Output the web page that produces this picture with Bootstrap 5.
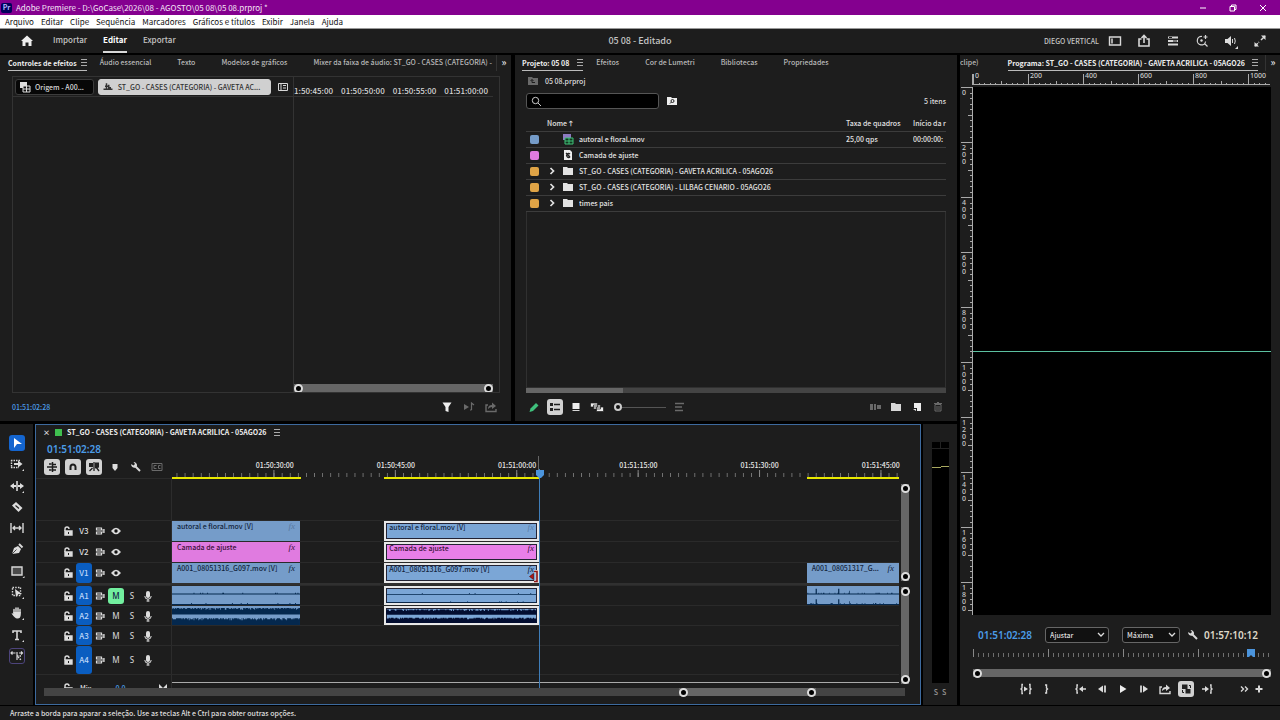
<!DOCTYPE html>
<html lang="pt-BR">
<head>
<meta charset="utf-8">
<meta name="viewport" content="width=device-width, initial-scale=1">
<title>Adobe Premiere</title>
<link href="https://cdn.jsdelivr.net/npm/bootstrap@5.3.0/dist/css/bootstrap.min.css" rel="stylesheet">
<style>
:root{--panel:#1d1d1d;--line:#333;--blue:#4b9ce8;--clip:#759cc9;--pink:#e07be0;--txt:#dcdcdc}
body{background:#000;color:var(--txt);font:500 7px/12px "Noto Sans CJK JP","Noto Sans",sans-serif;min-height:100vh}
svg{display:block;flex:none}
button,select,input{font:inherit;color:inherit}
a{color:inherit;text-decoration:none}
.ic{width:16px;height:16px;fill:none;stroke:currentColor;stroke-width:1.4}
.ib{width:16px;height:16px;padding:0;border:0;background:none;color:#d8d8d8;border-radius:3px;flex:none;display:block}
.ib.on{background:#d2d2d2;color:#1d1d1d}
.dim{color:#6a6a6a}

/* Window frame */
.titlebar{background:#84008f;height:15px;color:#f3e3f5;font-size:8px;font-weight:400;padding:0 2px 0 1px}
.titlebar .logo{width:11px;height:10px;border-radius:2px;background:#00005b;color:#b7b6ff;font-size:7px;line-height:9px;text-align:center;font-weight:700}
.wbtn{width:30px;height:15px;border:0;background:none;padding:0;color:#fff}
.menubar{background:#fff;color:#111;height:14px;padding:0 5px;gap:7px;font-size:8px;font-weight:400;line-height:14px;border-bottom:1px solid #999}
.topbar{background:var(--panel);height:24px;font-size:8px;padding:0 12px;color:#c4c4c4}
.topbar .side{flex:1 1 0}
.topbar .home{margin:0 2px 0 7px}
.topbar .mode{line-height:22px;border-bottom:2px solid transparent}
.topbar .mode.active{color:#fff;border-color:#d8d8d8;font-weight:700}
.topbar .docname{font-size:9px}
.topbar .user{font-size:7px}
.topicons{gap:13px}
.status{height:14px;background:var(--panel);padding-left:10px;line-height:14px;margin-top:1px;color:#ddd}

/* Panels */
.workspace{display:grid;grid-template-columns:minmax(0,957fr) minmax(0,320fr);gap:3px;padding-top:2px}
.upper{display:grid;grid-template-columns:minmax(0,511fr) minmax(0,442fr);gap:4px}
.panel{background:var(--panel)}
.tabs{height:16px;line-height:14px;white-space:nowrap;overflow:hidden;color:#b8b8b8}
.tabs .tab{flex:none}
.tabs .tab.active{color:#eee;font-weight:700;border-bottom:1px solid #bbb;height:16px}
.burger{width:6px;height:7px;border-top:1px solid #aaa;border-bottom:1px solid #aaa;background:linear-gradient(#aaa,#aaa) 0 2px/6px 1px no-repeat}
.more{font-size:10px;line-height:14px;width:15px;flex:none;border-left:1px solid #333;text-align:center;color:#eee}
.knob{width:9px;height:9px;border:2px solid #ddd;border-radius:50%;background:#000;flex:none}
.bar{background:#666;height:8px;display:flex;justify-content:space-between;align-items:center}
.foot{height:28px}
.tc{color:var(--blue)}
.tc.big,.dur{font-size:10px;font-weight:600;font-family:"Noto Sans",sans-serif}
.dur{color:#ddd8c8}

/* Effect controls */
.fxt{gap:26px}
.fxt .tab:nth-child(2){margin-left:-13px}
.fxbox{margin:5px 11px 0 12px;border:1px solid var(--line);min-height:0}
.fxleft{width:281px;border-right:1px solid var(--line)}
.fxhead{height:20px;border-bottom:1px solid var(--line);padding:0 2px}
.chip{height:16px;border:1px solid #3c3c3c;border-radius:3px;background:#070707;color:#d8d8d8;padding:0 3px;gap:4px;line-height:14px;white-space:nowrap}
.chip.lit{background:#d0d0d0;color:#333;border-color:#d0d0d0}
.chip .ic{width:12px}
.srcchip{width:79px}
.seqchip{width:174px}
.fxruler{height:20px;border-bottom:1px solid var(--line);white-space:nowrap;overflow:hidden;color:#d4d4d4;padding-top:8px;margin-right:6px;font-size:8px;gap:8px}
.fxph{width:3px;height:6px;background:var(--blue);align-self:end;margin-left:auto}
.fxbar{margin-right:6px}
.fxfoot{padding:0 12px;gap:6px}

/* Project bin */
.prt{padding-left:7px;gap:26px}
.prt .tab:nth-child(2){margin-left:-13px}
.prpath{height:20px;padding-left:10px;gap:4px}
.prsearch{height:20px;padding:0 11px;gap:5px}
.search{width:133px;height:16px;border:1px solid #555;border-radius:3px;background:#000;gap:4px;padding:0 4px}
.search input{border:0;background:none;width:100px;height:12px;padding:0;outline:0}
.bin{table-layout:fixed;width:100%;border-collapse:collapse;white-space:nowrap;color:#e2e2e2}
.bin th{font-weight:500;height:16px;padding:0}
.bin td{height:16px;padding:0;border-top:1px solid #3c3c3c;border-bottom:1px solid #3c3c3c;overflow:hidden}
.bin td .ic{margin:-1px 0}
.bin td .chv{margin-left:-3px}
.binwrap{margin:4px 11px 0}
.binbox{border:1px solid #303030;border-top:0}
.sw{width:9px;height:9px;border-radius:2px;display:block;margin-left:4px}
.hscroll{height:5px;background:#444}
.hscroll div{height:5px;width:23%;background:#666}
.prfoot{padding:0 11px;gap:5px}
.zoomr{width:52px;height:9px;margin-left:4px;appearance:none;background:linear-gradient(#555,#555) 0 4px/100% 1px no-repeat}
.zoomr::-webkit-slider-thumb{appearance:none;width:8px;height:8px;border:2px solid #ccc;border-radius:50%;background:#111}

/* Tools and timeline */
.lower{display:flex;gap:2px;padding-top:3px}
.tools{width:33px;padding-top:11px}
.toolcol{height:229px}
.tool.sel{background:#1465cf;color:#fff}
.timeline{border:1px solid #3d6a9e;min-width:0;padding-bottom:8px;overflow:hidden}
.tltab{height:14px;line-height:14px;padding-left:7px;color:#eee}
.tlsq{width:7px;height:7px;background:#3fbf4f;margin:0 1px}
.thead{width:136px;flex:none;border-right:1px solid #2c2c2c}
.tlane{flex:1 1 0;min-width:0}
.vcol{width:21px;flex:none;padding-left:2px}
.tlrule{height:40px}
.tlrule .thead{padding-left:8px;border-right:0;border-bottom:1px solid #2a2a2a}
.tlrule .tc{margin:4px 0 4px 3px}
.tlbtns{gap:5px}
.rulelane{justify-content:flex-end}
.tllabels{padding-left:5.8%;height:9px;line-height:9px;white-space:nowrap;color:#e8e8e8}
.lab{flex:none;width:17.7%;text-align:center}
.gaprow{height:41px}
.trk{height:21px;border-top:1px solid #2a2a2a}
.trk .thead{padding-left:24px;align-items:center}
.trk .tlane{display:flex}
.trk.aud{height:20px}
.trk.tall{height:29px}
.trk.mix{height:14px;overflow:hidden;align-items:flex-start}
.trk.mix .tlane{border-top:1px solid #aaa;margin-top:7px}
.trk.mix .thead{padding-top:5px}
.mixv{margin-left:24px}
.tname{width:16px;border:0;padding:0;background:none;color:#ddd;font-size:8px;border-radius:3px}
.tname.tgt{background:#0a5dc0;color:#bcd6f8;align-self:stretch}
.ms{width:16px;height:16px;border:0;padding:0;background:none;color:#ccc;border-radius:3px;font-size:8px;font-family:"Noto Sans",sans-serif;line-height:16px}
.ms.mute{background:#72ef9f;color:#124}
.cl{height:100%;background:var(--clip);color:#12243c;padding:0 5px;line-height:11px;white-space:nowrap;overflow:hidden;flex:none;display:flex;justify-content:space-between}
.cl.pk{background:var(--pink);color:#3a103a}
.cl.sel{border:2px solid #e8e8e8;box-shadow:inset 0 0 0 1px #223;padding:0 3px;line-height:8px;background:#7ba6d6}
.cl.sel.pk{background:#e87fe8}
.cl.au{padding:0;position:relative}
.cl svg{width:100%;height:100%}
.fade{position:absolute;top:0;left:3px;width:7px;height:6px;background:#ddd;border:1px solid #555}
.fade.out{left:auto;right:3px}
.fx{font-style:italic;font-family:"Liberation Serif",serif;font-size:9px}
.fx.off{opacity:.3}
.split{height:2px;background:#303030}
.yel{height:2px;background:#e8e800;flex:none}
.vbar{width:8px;background:#666;display:flex;flex-direction:column;justify-content:space-between;align-items:center}
.v1{height:97px;margin-top:5px}
.v2{margin-top:6px;margin-bottom:4px}
.phlayer{left:136px;right:21px;top:17px;bottom:0;pointer-events:none}
.ph{left:50.5%;top:13px;bottom:0;width:1px;background:#3f7db8}
.phthin{left:50.3%;top:0;height:14px;width:1px;background:#666}
.phead{left:50.5%;top:14px;margin-left:-3px}
.trim{left:49.1%;top:114px}
.hbar{background:#444;height:8px;margin:0 15px 0 8px}
.hthumb{width:137px;margin-left:635px}
.meters{width:34px;padding-top:18px}
.meter{width:17px;height:241px;background:#000}
.mss{margin-top:3px;color:#999}

/* Program monitor */
.pgt{margin-left:29px;width:250px}
.hruler{height:16px;margin:0 10px 0 12px;position:relative}
.hlab{overflow:hidden}
.hlab span{width:55px;flex:none;padding-left:3px}
.vruler{width:13px;contain:size;overflow:hidden;position:relative}
.rl{font:500 7px/9px "Noto Sans",sans-serif;color:#ccc}
.vruler span{display:block;height:55px;width:5px;word-break:break-all;line-height:7px;padding-top:2px;margin-left:2px}
.video{background:#000;margin-right:9px}
.guide{height:1px;background:#5cc0a0}
.pgctl{height:34px;padding:5px 22px 0 18px}
.pick{height:16px;border:1px solid #666;border-radius:3px;background:#111;color:#ddd;padding:0 4px;appearance:none;line-height:14px;width:100%;display:block}
.pickw{position:relative}
.pickw svg{position:absolute;right:4px;top:5px;pointer-events:none}
.p1{width:64px;margin-left:13px}
.p2{width:58px;margin:0 5px 0 13px}
.pgr{margin:0 9px 0 13px}
.pgph{left:92%;top:0}
.pgbar{margin:12px 9px 4px 13px}
.transport{padding:0 13px 8px 58px;gap:5px}
.g1{margin-left:13px}
</style>
</head>
<body class="d-flex flex-column">
<svg width="0" height="0" class="position-absolute" aria-hidden="true">
<defs>
<symbol id="lock" viewBox="0 0 16 16"><path d="M5 8V6a2 2 0 0 1 4 0" fill="none"/><path d="M5 8h7v4H5z" fill="#ddd"/><path d="M8.500 9v2" stroke="#1d1d1d" stroke-width="1"/></symbol>
<symbol id="sync" viewBox="0 0 16 16"><path d="M4.500 5h5v2h-5zM4.500 9h5v2h-5zM9 7h3v2H9M12 6v4" fill="none" stroke-width="1.200"/></symbol>
<symbol id="eye" viewBox="0 0 16 16"><path d="M4 8q4-5 8 0q-4 5-8 0z" fill="#ddd"/><circle cx="8" cy="8" r="1.700" fill="#111" stroke="none"/></symbol>
<symbol id="mic" viewBox="0 0 16 16"><rect x="6" y="3" width="4" height="7" rx="2" fill="#ddd" stroke="none"/><path d="M4.800 8q0 3.200 3.200 3.200T11.200 8M8 11v2.500M6.500 13h3" stroke-width="1"/></symbol>
<symbol id="folder" viewBox="0 0 16 16"><path d="M3 4h4l1 1h5v7H3z" fill="currentColor" stroke="none"/></symbol>
<symbol id="chev" viewBox="0 0 16 16"><path d="M6.500 5l3 3-3 3" stroke-width="1.700"/></symbol>
<symbol id="wrench" viewBox="0 0 16 16"><path d="M7 7l5 5" stroke-width="2"/><path d="M3.200 5a3.200 3.200 0 0 0 4.300 3.500L9 7a3.400 3.400 0 0 0-3.500-4L7 5 5.500 6.500z" fill="currentColor" stroke="none"/></symbol>
<symbol id="seq" viewBox="0 0 16 16"><path d="M6 3v3M4 7h5M2 11h12M9 5v5M6 8v4M11 8v3" stroke-width="2"/></symbol>
<symbol id="export" viewBox="0 0 16 16"><path d="M5 6H3v6.500h10V10"/><path d="M5 10q0-4 4-4V3.500L13 7 9 10V8Q7 8 5 10z" fill="currentColor" stroke="none"/></symbol>
</defs>
</svg>

<header>
  <div class="titlebar d-flex align-items-center">
    <span class="logo me-1">Pr</span><span>Adobe Premiere - D:\GoCase\2026\08 - AGOSTO\05 08\05 08.prproj *</span>
    <div class="ms-auto d-flex">
      <button class="wbtn" aria-label="Minimizar"><svg class="ic mx-auto" viewBox="0 0 16 16"><path d="M5 8h6" stroke-width="1"/></svg></button>
      <button class="wbtn" aria-label="Restaurar"><svg class="ic mx-auto" viewBox="0 0 16 16"><path d="M5 6.500h4.500V11H5zM6.500 6.500V5H11v4.500H9.500" stroke-width="1"/></svg></button>
      <button class="wbtn" aria-label="Fechar"><svg class="ic mx-auto" viewBox="0 0 16 16"><path d="M5 5l6 6M11 5l-6 6" stroke-width="1"/></svg></button>
    </div>
  </div>
  <nav class="menubar d-flex">
    <a href="#">Arquivo</a><a href="#">Editar</a><a href="#">Clipe</a><a href="#">Sequência</a><a href="#">Marcadores</a><a href="#">Gráficos e títulos</a><a href="#">Exibir</a><a href="#">Janela</a><a href="#">Ajuda</a>
  </nav>
  <div class="topbar d-flex align-items-center">
    <div class="side d-flex align-items-center gap-3">
      <button class="ib home" aria-label="Início"><svg class="ic" viewBox="0 0 16 16"><path d="M8 2.500L2 8h1.500v5H6.500V9.500h3V13h3V8H14z" fill="#eee" stroke="none"/></svg></button>
      <a class="mode" href="#">Importar</a><a class="mode active" href="#">Editar</a><a class="mode" href="#">Exportar</a>
    </div>
    <div class="docname">05 08 - Editado</div>
    <div class="side d-flex align-items-center justify-content-end">
      <span class="user me-2">DIEGO VERTICAL</span>
      <div class="d-flex topicons">
      <button class="ib" aria-label="Espaços de trabalho"><svg class="ic" viewBox="0 0 16 16"><path d="M2.500 4h11v8h-11z"/><path d="M5 5.500v5" stroke-width="1.500"/></svg></button>
      <button class="ib" aria-label="Exportação rápida"><svg class="ic" viewBox="0 0 16 16"><path d="M5.500 6H3v7h10V6h-2.500M8 10V3M5.500 5L8 2.500 10.500 5" stroke-width="1.600"/></svg></button>
      <button class="ib" aria-label="Progresso"><svg class="ic" viewBox="0 0 16 16"><path d="M3 4.500h10M3 8h10M3 11.500h10" stroke-width="2.200"/><path d="M8 8h4M4 4.500h3" stroke="#1d1d1d" stroke-width="1"/></svg></button>
      <button class="ib" aria-label="Pesquisar"><svg class="ic" viewBox="0 0 16 16"><path d="M8 3.500a4.200 4.200 0 1 0 3.600 5M10.500 10.500l3 3M11.500 2v4M9.500 4h4" stroke-width="1.200"/><circle cx="7.500" cy="7.500" r="1.200" fill="#ddd" stroke="none"/></svg></button>
      <button class="ib" aria-label="Áudio"><svg class="ic" viewBox="0 0 16 16"><path d="M2 6h2.500L8 3v10L4.500 10H2z" fill="#ddd" stroke="none"/><path d="M9.500 6v4M11.500 5q1.500 3 0 6" stroke-width="1"/><path d="M15 13v3h-3z" fill="#ddd" stroke="none"/></svg></button>
      <button class="ib" aria-label="Tela cheia"><svg class="ic" viewBox="0 0 16 16"><path d="M9 7l4-4M3 13l4-4" stroke-width="1.500" stroke-dasharray="4 1"/><path d="M9 2.500h4.500V7zM2.500 9v4.500H7z" fill="#ddd" stroke="none"/></svg></button>
      </div>
    </div>
  </div>
</header>

<main class="workspace flex-fill">
 <div class="d-flex flex-column">
  <div class="upper flex-fill">
    <section class="panel d-flex flex-column">
      <div class="tabs d-flex">
        <div class="d-flex flex-fill fxt overflow-hidden"><div class="tab active d-flex align-items-center ms-2">Controles de efeitos<i class="burger ms-1"></i></div><a class="tab" href="#">Áudio essencial</a><a class="tab" href="#">Texto</a><a class="tab" href="#">Modelos de gráficos</a><a class="tab" href="#">Mixer da faixa de áudio: ST_GO - CASES (CATEGORIA) -</a></div>
        <a class="more" href="#">»</a>
      </div>
      <div class="fxbox d-flex flex-fill">
        <div class="fxleft">
          <div class="fxhead d-flex align-items-center gap-1">
            <button class="chip d-flex align-items-center srcchip"><svg width="12" height="12" viewBox="0 0 12 12"><path d="M1 1h7v6H1z" fill="#ddd"/><path d="M4 5h7v6H4z" fill="#111" stroke="#ddd"/><path d="M4 8h7M7.500 5v6" stroke="#ddd"/></svg>Origem - A00...</button>
            <button class="chip lit d-flex align-items-center seqchip"><svg class="ic"><use href="#seq"/></svg>ST_GO - CASES (CATEGORIA) - GAVETA AC...</button>
            <button class="ib" aria-label="Mostrar linha do tempo"><svg class="ic" viewBox="0 0 16 16"><path d="M3.500 4.500h9v7h-9zM6 4.500v7M8 6.500h3M8 9h3" stroke-width="1"/></svg></button>
          </div>
        </div>
        <div class="flex-fill d-flex flex-column overflow-hidden">
          <div class="fxruler d-flex"><span>1:50:45:00</span><span>01:50:50:00</span><span>01:50:55:00</span><span>01:51:00:00</span><i class="fxph"></i></div>
          <div class="bar mt-auto fxbar"><i class="knob"></i><i class="knob"></i></div>
        </div>
      </div>
      <div class="foot d-flex align-items-center fxfoot">
        <span class="tc me-auto">01:51:02:28</span>
        <button class="ib" aria-label="Filtro"><svg class="ic" viewBox="0 0 16 16"><path d="M3.500 3.500h9L9.500 8v5l-3-1V8z" fill="#eee" stroke="none"/></svg></button>
        <button class="ib dim" aria-label="Reproduzir áudio"><svg class="ic" viewBox="0 0 16 16"><path d="M3 5l5 3-5 3z" fill="currentColor" stroke="none"/><path d="M10.500 11V4l2.500 2M9 11h1.500" stroke-width="1.200"/></svg></button>
        <button class="ib dim" aria-label="Exportar efeito"><svg class="ic"><use href="#export"/></svg></button>
      </div>
    </section>

    <section class="panel d-flex flex-column">
      <div class="tabs d-flex prt"><div class="tab active d-flex align-items-center">Projeto: 05 08<i class="burger ms-2"></i></div><a class="tab" href="#">Efeitos</a><a class="tab" href="#">Cor de Lumetri</a><a class="tab" href="#">Bibliotecas</a><a class="tab" href="#">Propriedades</a></div>
      <div class="d-flex align-items-center prpath"><svg class="ic dim" viewBox="0 0 16 16"><path d="M3 4h4l1 1h5v7H3z" fill="currentColor" stroke="none"/><path d="M7 6.500v3h3M5.500 8L7 6.500 8.500 8" stroke="#1d1d1d" stroke-width="1"/></svg>05 08.prproj</div>
      <div class="d-flex align-items-center prsearch">
        <label class="search d-flex align-items-center"><svg width="11" height="11" viewBox="0 0 11 11" fill="none" stroke="#ccc"><circle cx="4.500" cy="4.500" r="3.200"/><path d="M7 7l3 3"/></svg><input type="search" aria-label="Pesquisar no projeto"></label>
        <button class="ib" aria-label="Compartimento de pesquisa"><svg class="ic" viewBox="0 0 16 16"><path d="M3 4h4l1 1h5v7H3z" fill="#eee" stroke="none"/><circle cx="8.500" cy="8" r="1.500" stroke="#222" stroke-width="1"/><path d="M7.500 9L6 10.500" stroke="#222" stroke-width="1"/></svg></button>
        <span class="ms-auto">5 itens</span>
      </div>
      <div class="binwrap flex-fill d-flex flex-column">
        <table class="bin">
          <colgroup><col style="width:21px"><col style="width:13px"><col style="width:19px"><col><col style="width:67px"><col style="width:33px"></colgroup>
          <thead><tr><th></th><th colspan="3">Nome <b>🡑</b></th><th>Taxa de quadros</th><th>Início da r</th></tr></thead>
          <tbody>
          <tr><td><i class="sw" style="background:#759cc9"></i></td><td></td><td><svg class="ic" viewBox="0 0 16 16"><path d="M3 3h8v6H3z" fill="#8d7ac0" stroke="none"/><path d="M5 7h8v6H5zM5 10h8M9 7v6" fill="#12351f" stroke="#3fc278" stroke-width="1"/></svg></td><td>autoral e floral.mov</td><td>25,00 qps</td><td>00:00:00:</td></tr>
          <tr><td><i class="sw" style="background:#e07be0"></i></td><td></td><td><svg class="ic" viewBox="0 0 16 16"><path d="M4 3h6l2 2v8H4z" fill="#eee" stroke="none"/><path d="M6 6l4 4M10 7a2 2 0 1 0 0 3" stroke="#222"/></svg></td><td>Camada de ajuste</td><td></td><td></td></tr>
          <tr><td><i class="sw" style="background:#e0a446"></i></td><td><svg class="ic chv"><use href="#chev"/></svg></td><td><svg class="ic"><use href="#folder"/></svg></td><td>ST_GO - CASES (CATEGORIA) - GAVETA ACRILICA - 05AGO26</td><td></td><td></td></tr>
          <tr><td><i class="sw" style="background:#e0a446"></i></td><td><svg class="ic chv"><use href="#chev"/></svg></td><td><svg class="ic"><use href="#folder"/></svg></td><td>ST_GO - CASES (CATEGORIA) - LILBAG CENARIO - 05AGO26</td><td></td><td></td></tr>
          <tr><td><i class="sw" style="background:#e0a446"></i></td><td><svg class="ic chv"><use href="#chev"/></svg></td><td><svg class="ic"><use href="#folder"/></svg></td><td>times pais</td><td></td><td></td></tr>
          </tbody>
        </table>
        <div class="binbox flex-fill"></div>
        <div class="hscroll"><div></div></div>
      </div>
      <div class="foot d-flex align-items-center prfoot">
        <button class="ib" aria-label="Gravável"><svg class="ic" viewBox="0 0 16 16"><path d="M3.500 13l1-3.500L10 4l2.500 2.500L7 12z" fill="#3fc07c" stroke="none"/></svg></button>
        <button class="ib on" aria-label="Lista"><svg class="ic" viewBox="0 0 16 16"><path d="M3 4h3v3H3zM3 9h3v3H3z" fill="#222" stroke="none"/><path d="M7 5.500h6M7 10.500h6"/></svg></button>
        <button class="ib" aria-label="Ícones"><svg class="ic" viewBox="0 0 16 16"><path d="M4.500 4h7v6h-7z" fill="#eee" stroke="none"/><path d="M4.500 11.500h7" stroke-width="1"/></svg></button>
        <button class="ib" aria-label="Forma livre"><svg class="ic" viewBox="0 0 16 16"><path d="M1.500 4h7v4h-7zM4.500 6h7v4h-7zM7.500 8h7v4.500h-7z" fill="#eee" stroke="#1d1d1d" stroke-width=".7"/></svg></button>
        <input class="zoomr" type="range" min="0" max="100" value="0" aria-label="Tamanho">
        <button class="ib dim" aria-label="Classificar"><svg class="ic" viewBox="0 0 16 16"><path d="M4 4.500h9M4 8h7M4 11.500h8"/></svg></button>
        <button class="ib dim ms-auto" aria-label="Automatizar"><svg class="ic" viewBox="0 0 16 16"><path d="M3 5h3v6H3zM7 5h2v6H7zM10 6h4v4h-4z" fill="currentColor" stroke="none"/></svg></button>
        <button class="ib" aria-label="Novo compartimento"><svg class="ic"><use href="#folder"/></svg></button>
        <button class="ib" aria-label="Novo item"><svg class="ic" viewBox="0 0 16 16"><path d="M5 4h7v8H8V9H5z" fill="#eee" stroke="none"/><path d="M4 10h3v2z" fill="#eee" stroke="none"/></svg></button>
        <button class="ib dim" aria-label="Limpar"><svg class="ic" viewBox="0 0 16 16"><path d="M5 5.500h6V12H5zM4 4.500h8M7 3.500h2M7 7v4M9 7v4" stroke-width="1"/></svg></button>
      </div>
    </section>
  </div>

  <div class="lower">
    <nav class="tools panel">
      <div class="toolcol d-flex flex-column justify-content-between align-items-center">
      <button class="ib tool sel" aria-label="Seleção"><svg class="ic" viewBox="0 0 16 16"><path d="M5 3l8 6H8l-3 4z" fill="#fff" stroke="none"/></svg></button>
      <button class="ib" aria-label="Selecionar faixa"><svg class="ic" viewBox="0 0 16 16"><path d="M2 4.500h9M2 11.500h8M2.500 4v8" stroke-dasharray="1.500 1"/><path d="M5 8h5" stroke-width="2"/><path d="M9 4.500L13.500 8 9 11.500z" fill="#ddd" stroke="none"/><path d="M15 13v2h-2z" fill="#ddd" stroke="none"/></svg></button>
      <button class="ib" aria-label="Edição de ondulação"><svg class="ic" viewBox="0 0 16 16"><path d="M8 3v10" stroke-width="1.600"/><path d="M1 8l4-3v2h2v2H5v2zM15 8l-4-3v2H9v2h2v2z" fill="#ddd" stroke="none"/><path d="M15 13v2h-2z" fill="#ddd" stroke="none"/></svg></button>
      <button class="ib" aria-label="Fatiar"><svg class="ic" viewBox="0 0 16 16"><path d="M3 6.500L7 3l6.500 6-4 4z" fill="#ddd" stroke="none"/><path d="M6.500 6.500l3.500 3" stroke="#222" stroke-width="1.200"/></svg></button>
      <button class="ib" aria-label="Deslizar"><svg class="ic" viewBox="0 0 16 16"><path d="M2 3v10M14 3v10M4 8h8M6 6L4 8l2 2M10 6l2 2-2 2"/></svg></button>
      <button class="ib" aria-label="Caneta"><svg class="ic" viewBox="0 0 16 16"><path d="M3 13l2-6 4-2 3 3-2 4z" fill="#ddd" stroke="none"/><path d="M10 3l3.500 3.500" stroke-width="2"/><path d="M3 13l4.500-4.500" stroke="#222" stroke-width=".8"/></svg></button>
      <button class="ib" aria-label="Retângulo"><svg class="ic" viewBox="0 0 16 16"><path d="M3 4h10v8H3z" fill="#4a4a4a"/><path d="M15.500 13v2h-2z" fill="#ddd" stroke="none"/></svg></button>
      <button class="ib" aria-label="Máscara de objeto"><svg class="ic" viewBox="0 0 16 16"><path d="M3.500 3.500h8v8h-8z" stroke-dasharray="1.500 1.200"/><path d="M6 5l7 5H9.500L7 13z" fill="#ddd" stroke="none"/><path d="M15 13v2h-2z" fill="#ddd" stroke="none"/></svg></button>
      <button class="ib" aria-label="Mão"><svg class="ic" viewBox="0 0 16 16"><path d="M5 8V4.500M7 7V3M9 7V3M11 8V4.500" stroke-width="1.500" stroke-linecap="round"/><path d="M4.300 7h7.500v3q-.5 3.500-3 3.500H8Q6 13.500 2.500 8.500q1-.8 1.800.5z" fill="#ddd" stroke="none"/><path d="M15 13v2h-2z" fill="#ddd" stroke="none"/></svg></button>
      <button class="ib" aria-label="Texto"><svg class="ic" viewBox="0 0 16 16"><path d="M4 6V4h8v2M8 4v8.500M6 12.500h4" stroke-width="1.600"/><path d="M15 13v2h-2z" fill="#ddd" stroke="none"/></svg></button>
      <button class="ib" aria-label="Extensão generativa"><svg class="ic" viewBox="0 0 16 16"><rect x=".5" y=".5" width="15" height="15" rx="2.500" stroke="#4d447c" stroke-width="1"/><path d="M2.500 5h4M3.500 3.500L2 5l1.500 1.500M10 5h3M12 3.500L13.500 5 12 6.500M8 4v8" stroke-width="1.200"/><path d="M8 8h4M9 9l3 3" stroke-width="1.500" stroke-dasharray="1.500 1"/></svg></button>
      </div>
    </nav>

    <section class="timeline panel flex-fill">
      <div class="tltab d-flex align-items-center gap-1"><span>×</span><i class="tlsq"></i><b>ST_GO - CASES (CATEGORIA) - GAVETA ACRILICA - 05AGO26</b><i class="burger ms-1"></i></div>
      <div class="position-relative">
      <div class="d-flex tlrule">
        <div class="thead d-flex flex-column">
          <span class="tc big">01:51:02:28</span>
          <div class="d-flex tlbtns">
            <button class="ib on" aria-label="Inserir como aninhamento"><svg class="ic" viewBox="0 0 16 16"><path d="M3 8h10M5 5h2.500M5 11h2.500M9 5.500h3M9 11h3M8.500 3v10" stroke-width="1.500"/></svg></button>
            <button class="ib on" aria-label="Encaixar"><svg class="ic" viewBox="0 0 16 16"><path d="M5.500 11V8a2.500 2.500 0 0 1 5 0v3" stroke-width="2"/></svg></button>
            <button class="ib on" aria-label="Seleção vinculada"><svg class="ic" viewBox="0 0 16 16"><path d="M3 4h4v4H3zM9 3.500h4v5l-4 1z" fill="#222" stroke="none"/><path d="M8 3v9M3.500 12l3-3M10 8l3 4" stroke-width="1.300"/></svg></button>
            <button class="ib" aria-label="Marcador"><svg class="ic" viewBox="0 0 16 16"><path d="M5.500 5h5v4L8 12 5.500 9z" fill="#ddd" stroke="none"/></svg></button>
            <button class="ib" aria-label="Configurações"><svg class="ic"><use href="#wrench"/></svg></button>
            <button class="ib dim" aria-label="Legendas"><svg class="ic" viewBox="0 0 16 16"><path d="M3 4.500h10v7H3zM7.500 6.500H5v3h2.500M11.500 6.500H9.500v3h2" stroke-width="1"/></svg></button>
          </div>
        </div>
        <div class="tlane rulelane d-flex flex-column">
          <div class="d-flex tllabels"><span class="lab">01:50:30:00</span><span class="lab">01:50:45:00</span><span class="lab">01:51:00:00</span><span class="lab">01:51:15:00</span><span class="lab">01:51:30:00</span><span class="lab">01:51:45:00</span></div>
          <svg width="100%" height="7" shape-rendering="crispEdges"><defs>
            <pattern id="tmin" x="0.620%" y="0" width="1.113%" height="7" patternUnits="userSpaceOnUse"><path d="M.5 3v4" stroke="#777"/></pattern>
            <pattern id="tmaj" x="13.950%" y="0" width="16.700%" height="7" patternUnits="userSpaceOnUse"><path d="M.5 0v7" stroke="#888"/></pattern></defs>
            <rect width="100%" height="7" fill="url(#tmin)"/><rect width="100%" height="7" fill="url(#tmaj)"/></svg>
          <div class="d-flex"><i class="yel" style="width:17.7%"></i><i class="yel" style="margin-left:11.5%;width:21.400%"></i><i class="yel" style="margin-left:36.700%;width:12.700%"></i></div>
        </div>
        <div class="vcol"></div>
      </div>
      <div class="d-flex">
        <div class="flex-fill overflow-hidden">
          <div class="d-flex gaprow"><div class="thead"></div><div class="tlane"></div></div>
          <div class="trk d-flex"><div class="thead d-flex"><svg class="ic"><use href="#lock"/></svg><button class="tname">V3</button><svg class="ic"><use href="#sync"/></svg><svg class="ic"><use href="#eye"/></svg></div>
            <div class="tlane"><div class="cl" style="width:17.600%">autoral e floral.mov [V]<span class="fx off">fx</span></div><div class="cl sel" style="margin-left:11.600%;width:21.300%">autoral e floral.mov [V]<span class="fx off">fx</span></div></div></div>
          <div class="trk d-flex"><div class="thead d-flex"><svg class="ic"><use href="#lock"/></svg><button class="tname">V2</button><svg class="ic"><use href="#sync"/></svg><svg class="ic"><use href="#eye"/></svg></div>
            <div class="tlane"><div class="cl pk" style="width:17.600%">Camada de ajuste<span class="fx">fx</span></div><div class="cl pk sel" style="margin-left:11.600%;width:21.300%">Camada de ajuste<span class="fx">fx</span></div></div></div>
          <div class="trk d-flex"><div class="thead d-flex"><svg class="ic"><use href="#lock"/></svg><button class="tname tgt">V1</button><svg class="ic"><use href="#sync"/></svg><svg class="ic"><use href="#eye"/></svg></div>
            <div class="tlane"><div class="cl" style="width:17.600%">A001_08051316_G097.mov [V]<span class="fx">fx</span></div><div class="cl sel" style="margin-left:11.600%;width:21.300%">A001_08051316_G097.mov [V]<span class="fx">fx</span></div><div class="cl" style="margin-left:36.800%;width:12.700%">A001_08051317_G...<span class="fx">fx</span></div></div></div>
          <div class="split"></div>
          <div class="trk aud d-flex"><div class="thead d-flex"><svg class="ic"><use href="#lock"/></svg><button class="tname tgt">A1</button><svg class="ic"><use href="#sync"/></svg><button class="ms mute">M</button><button class="ms">S</button><svg class="ic"><use href="#mic"/></svg></div>
            <div class="tlane"><div class="cl au" style="width:17.600%"><svg data-wave="quiet" data-seed="3"></svg></div><div class="cl sel au" style="margin-left:11.600%;width:21.300%"><svg data-wave="quiet" data-seed="5"></svg><i class="fade"></i><i class="fade out"></i></div><div class="cl au" style="margin-left:36.800%;width:12.700%"><svg data-wave="peaks" data-seed="7"></svg></div></div></div>
          <div class="trk aud d-flex"><div class="thead d-flex"><svg class="ic"><use href="#lock"/></svg><button class="tname tgt">A2</button><svg class="ic"><use href="#sync"/></svg><button class="ms">M</button><button class="ms">S</button><svg class="ic"><use href="#mic"/></svg></div>
            <div class="tlane"><div class="cl au" style="width:17.600%"><svg data-wave="loud" data-seed="11"></svg></div><div class="cl sel au" style="margin-left:11.600%;width:21.300%"><svg data-wave="dark" data-seed="13"></svg><i class="fade"></i><i class="fade out"></i></div></div></div>
          <div class="trk aud d-flex"><div class="thead d-flex"><svg class="ic"><use href="#lock"/></svg><button class="tname tgt">A3</button><svg class="ic"><use href="#sync"/></svg><button class="ms">M</button><button class="ms">S</button><svg class="ic"><use href="#mic"/></svg></div><div class="tlane"></div></div>
          <div class="trk tall d-flex"><div class="thead d-flex"><svg class="ic"><use href="#lock"/></svg><button class="tname tgt">A4</button><svg class="ic"><use href="#sync"/></svg><button class="ms">M</button><button class="ms">S</button><svg class="ic"><use href="#mic"/></svg></div><div class="tlane"></div></div>
          <div class="trk mix d-flex"><div class="thead d-flex"><svg class="ic"><use href="#lock"/></svg><span class="ps-1">Mix</span><span class="tc mixv">0,0</span><svg class="ic ms-auto" viewBox="0 0 16 16"><path d="M4 4v8l4-4zM12 4v8L8 8z" fill="#ddd" stroke="none"/></svg></div><div class="tlane"></div></div>
        </div>
        <div class="vcol d-flex flex-column">
          <div class="vbar v1"><i class="knob"></i><i class="knob"></i></div>
          <div class="vbar v2 flex-fill"><i class="knob"></i><i class="knob"></i></div>
        </div>
      </div>
      <div class="phlayer position-absolute"><i class="phthin position-absolute"></i><i class="ph position-absolute"></i><svg class="phead position-absolute" width="8" height="8"><path d="M0 0h8v5L5 8H3L0 5z" fill="#4b94dc"/></svg>
        <svg class="trim position-absolute" width="10" height="13" viewBox="0 0 10 13"><path d="M5 1.500h3v10H5" fill="none" stroke="#ddd" stroke-width="3"/><path d="M5 1.500h3v10H5" fill="none" stroke="#8e1414" stroke-width="1.600"/><path d="M.5 6.500l4-3v6z" fill="#b01818" stroke="#4a0000" stroke-width=".6"/></svg></div>
      </div>
      <div class="hbar d-flex"><div class="hthumb bar"><i class="knob"></i><i class="knob"></i></div></div>
    </section>

    <section class="meters panel d-flex flex-column align-items-center">
      <div class="meter"><svg width="17" height="40" shape-rendering="crispEdges"><path d="M0 6.500h17M8.500 0v6" stroke="#222"/><path d="M0 25.500h9M9 24.500h8" stroke="#a8a860"/></svg></div>
      <div class="d-flex gap-1 mss"><span>S</span><span>S</span></div>
    </section>
  </div>
 </div>

 <section class="panel d-flex flex-column">
   <div class="tabs d-flex"><a class="tab" href="#">clipe)</a><div class="tab active d-flex align-items-center pgt">Programa: ST_GO - CASES (CATEGORIA) - GAVETA ACRILICA - 05AGO26<i class="burger ms-auto"></i></div><a class="more ms-auto" href="#">»</a></div>
   <div class="hruler rl"><svg class="position-absolute" width="100%" height="14" shape-rendering="crispEdges"><defs><pattern id="hp" x="1" width="55" height="14" patternUnits="userSpaceOnUse"><path d="M.5 3v11M6.500 12v2M11.500 12v2M17.500 12v2M22.500 12v2M28.500 10v4M33.500 12v2M39.500 12v2M44.500 12v2M50.500 12v2" stroke="#aaa"/></pattern></defs><rect x="1" width="100%" height="14" fill="url(#hp)"/><path d="M0 13.500h2000M.5 3v11" stroke="#aaa"/></svg>
     <div class="d-flex position-relative hlab"><span>0</span><span>200</span><span>400</span><span>600</span><span>800</span><span>1000</span></div></div>
   <div class="d-flex flex-fill">
     <div class="vruler rl"><svg class="position-absolute" width="13" height="100%" shape-rendering="crispEdges"><defs><pattern id="vp" width="13" height="55" patternUnits="userSpaceOnUse"><path d="M1 .5h11M10 6.500h2M10 11.500h2M10 17.500h2M10 22.500h2M8 28.500h4M10 33.500h2M10 39.500h2M10 44.500h2M10 50.500h2M12.500 0v55" stroke="#aaa"/></pattern></defs><rect width="13" height="100%" fill="url(#vp)"/></svg>
       <div class="position-relative"><span>0</span><span>200</span><span>400</span><span>600</span><span>800</span><span>1000</span><span>1200</span><span>1400</span><span>1600</span><span>1800</span></div></div>
     <div class="video flex-fill d-flex flex-column justify-content-center"><i class="guide"></i></div>
   </div>
   <div class="d-flex align-items-center pgctl">
     <span class="tc big">01:51:02:28</span>
     <div class="pickw p1"><select class="pick" aria-label="Nível de zoom"><option>Ajustar</option></select><svg width="8" height="6"><path d="M1 1l3 3 3-3" fill="none" stroke="#ddd" stroke-width="1.300"/></svg></div>
     <div class="pickw p2"><select class="pick" aria-label="Resolução"><option>Máxima</option></select><svg width="8" height="6"><path d="M1 1l3 3 3-3" fill="none" stroke="#ddd" stroke-width="1.300"/></svg></div>
     <button class="ib" aria-label="Configurações"><svg class="ic"><use href="#wrench"/></svg></button>
     <span class="dur ms-auto">01:57:10:12</span>
   </div>
   <div class="pgr position-relative"><svg width="100%" height="8" shape-rendering="crispEdges"><defs>
     <pattern id="pmin" width="1.678%" height="8" patternUnits="userSpaceOnUse"><path d="M.5 4v4" stroke="#777"/></pattern>
     <pattern id="pmaj" width="25.170%" height="8" patternUnits="userSpaceOnUse"><path d="M.5 0v8" stroke="#888"/></pattern></defs><rect width="100%" height="8" fill="url(#pmin)"/><rect width="100%" height="8" fill="url(#pmaj)"/></svg>
     <svg class="position-absolute pgph" width="8" height="8"><path d="M0 0h8v8H6L4 6 2 8H0z" fill="#4b94dc"/></svg></div>
   <div class="bar pgbar"><i class="knob"></i><i class="knob"></i></div>
   <div class="d-flex transport">
     <button class="ib" aria-label="Reproduzir entrada a saída"><svg class="ic" viewBox="0 0 16 16"><path d="M5 3.500H4v3.500L3 8l1 1v3.500h1M11 3.500h1v3.500l1 1-1 1v3.500h-1"/><path d="M6 5.500l4 2.500-4 2.500z" fill="#ddd" stroke="none"/></svg></button>
     <button class="ib" aria-label="Marcar saída"><svg class="ic" viewBox="0 0 16 16"><path d="M6 4h1.500v3l1 1-1 1v3H6"/></svg></button>
     <button class="ib g1" aria-label="Ir para entrada"><svg class="ic" viewBox="0 0 16 16"><path d="M5 4H4v3L3 8l1 1v3h1M7 8h6"/><path d="M6 8l4-3v6z" fill="#ddd" stroke="none"/></svg></button>
     <button class="ib" aria-label="Quadro anterior"><svg class="ic" viewBox="0 0 16 16"><path d="M4 8l5-3.500v7z" fill="#ddd" stroke="none"/><path d="M11 4.500v7" stroke-width="1.800"/></svg></button>
     <button class="ib" aria-label="Reproduzir"><svg class="ic" viewBox="0 0 16 16"><path d="M5 4l6.500 4L5 12z" fill="#eee" stroke="none"/></svg></button>
     <button class="ib" aria-label="Próximo quadro"><svg class="ic" viewBox="0 0 16 16"><path d="M12 8L7 4.500v7z" fill="#ddd" stroke="none"/><path d="M5 4.500v7" stroke-width="1.800"/></svg></button>
     <button class="ib" aria-label="Exportar quadro"><svg class="ic"><use href="#export"/></svg></button>
     <button class="ib on" aria-label="Comparar"><svg class="ic" viewBox="0 0 16 16"><path d="M4 3.500h5.500V8H4zM7.500 8h5v4.500h-5z" fill="#222" stroke="none"/><path d="M11 4.500h1.500V7M4.500 9v2.500H6" stroke-width="1"/></svg></button>
     <button class="ib" aria-label="Ir para saída"><svg class="ic" viewBox="0 0 16 16"><path d="M11 4h1v3l1 1-1 1v3h-1M3 8h4"/><path d="M10 8L6 5v6z" fill="#ddd" stroke="none"/></svg></button>
     <div class="d-flex ms-auto">
     <button class="ib" aria-label="Mais controles"><svg class="ic" viewBox="0 0 16 16"><path d="M6 5.500L8.500 8 6 10.500M10 5.500L12.500 8 10 10.500"/></svg></button>
     <button class="ib" aria-label="Editor de botões"><svg class="ic" viewBox="0 0 16 16"><path d="M8 4.500v7M4.500 8h7" stroke-width="2"/></svg></button>
     </div>
   </div>
 </section>
</main>
<footer class="status">Arraste a borda para aparar a seleção. Use as teclas Alt e Ctrl para obter outras opções.</footer>
<script src="https://cdn.jsdelivr.net/npm/bootstrap@5.3.0/dist/js/bootstrap.bundle.min.js"></script>
<script>
/* Draws the stereo waveform of each audio clip */
document.querySelectorAll('svg[data-wave]').forEach(function (s) {
  var kind = s.dataset.wave, n = +s.dataset.seed, d = '';
  function rnd() { n = (n * 16807) % 2147483647; return n / 2147483647; }
  [9, 20].forEach(function (base) {
    for (var x = 0; x < 160; x++) {
      var r = rnd(), h;
      if (kind === 'quiet') h = r > .95 ? 2 : 1;
      else if (kind === 'peaks') h = (x > 14 && x < 17) || (x > 53 && x < 56) ? 6 : (x > 72 && x < 74 ? 4 : 1 + (r > .9 ? 1 : 0));
      else h = 6 + Math.round(r * 1.2) - (r > .92 ? 2 : 0);
      d += 'M' + (x + .5) + ' ' + base + 'v-' + h;
    }
  });
  s.setAttribute('viewBox', '0 0 160 20');
  s.setAttribute('preserveAspectRatio', 'none');
  s.innerHTML = '<path d="' + d + '" stroke="' + (kind === 'dark' ? '#020d30' : '#04284e') + '" stroke-width="1.1"/>';
});
</script>
</body>
</html>
